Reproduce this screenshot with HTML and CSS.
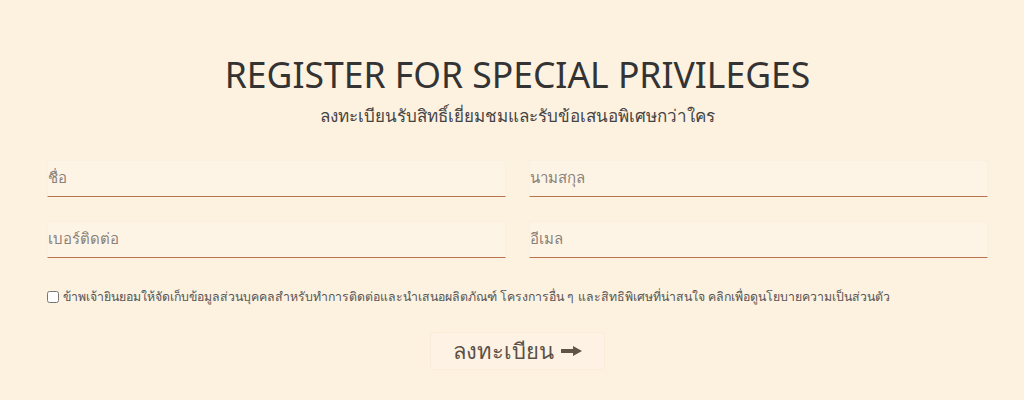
FILE: index.html
```html
<!DOCTYPE html>
<html lang="th">
<head>
  <meta charset="UTF-8" />
  <meta name="viewport" content="width=device-width, initial-scale=1.0" />
  <title>Register for Special Privileges</title>
  <link rel="stylesheet" href="styles.css">
</head>
<body>
  <section class="register">
    <h2 class="register-title">REGISTER FOR SPECIAL PRIVILEGES</h2>
    <p class="register-sub">ลงทะเบียนรับสิทธิ์เยี่ยมชมและรับข้อเสนอพิเศษกว่าใคร</p>

    <form class="register-form">
      <div class="field-grid">
        <input class="field" type="text" placeholder="ชื่อ" />
        <input class="field" type="text" placeholder="นามสกุล" />
        <input class="field" type="tel" placeholder="เบอร์ติดต่อ" />
        <input class="field" type="email" placeholder="อีเมล" />
      </div>

      <label class="consent">
        <input type="checkbox" />
        <span>ข้าพเจ้ายินยอมให้จัดเก็บข้อมูลส่วนบุคคลสำหรับทำการติดต่อและนำเสนอผลิตภัณฑ์ โครงการอื่น ๆ และสิทธิพิเศษที่น่าสนใจ คลิกเพื่อดูนโยบายความเป็นส่วนตัว</span>
      </label>

      <div class="actions">
        <button type="submit" class="submit">
          ลงทะเบียน
          <svg class="arrow" width="21" height="10" viewBox="0 0 21 10"><path d="M0 3h12V0l9 5-9 5V7H0z" fill="#5f5447"/></svg>
        </button>
      </div>
    </form>
  </section>
</body>
</html>
```

FILE: styles.css
```css
html, body { margin: 0; background: #fdf1e0; }
body { font-family: "Noto Sans", "DejaVu Sans", sans-serif; color: #333; }
.register { padding: 52px 36px 0 47px; }
.register-title { margin: 0; text-align: center; font-size: 35.5px; font-weight: 400; color: #333; line-height: 44px; }
.register-sub { margin: 8px 0 0; text-align: center; font-size: 17px; font-weight: 300; color: #444; line-height: 24px; }
.register-form { margin-top: 32px; }
.field-grid { display: grid; grid-template-columns: 1fr 1fr; column-gap: 23px; row-gap: 24px; }
.field { box-sizing: border-box; font-family: inherit; font-size: 15px; font-weight: 300; color: #555; background: #fef4e6; border: 1px solid #fcefe0; border-bottom: 1px solid #b8734f; height: 37px; padding: 0 0 4px; outline: none; }
.field::placeholder { color: #8a8178; }
.consent { display: flex; align-items: center; gap: 4px; margin-top: 29px; font-size: 12.3px; color: #555; }
.consent input { margin: 0; width: 12px; height: 12px; }
.actions { display: flex; justify-content: center; margin-top: 26px; }
.submit { display: flex; align-items: center; gap: 7px; font-family: inherit; font-size: 22px; font-weight: 300; color: #5b5148; background: #fdf2e3; border: 1px solid #fbecd9; border-radius: 3px; height: 38px; padding: 0 22px; cursor: pointer; }
.arrow { display: block; }
```
